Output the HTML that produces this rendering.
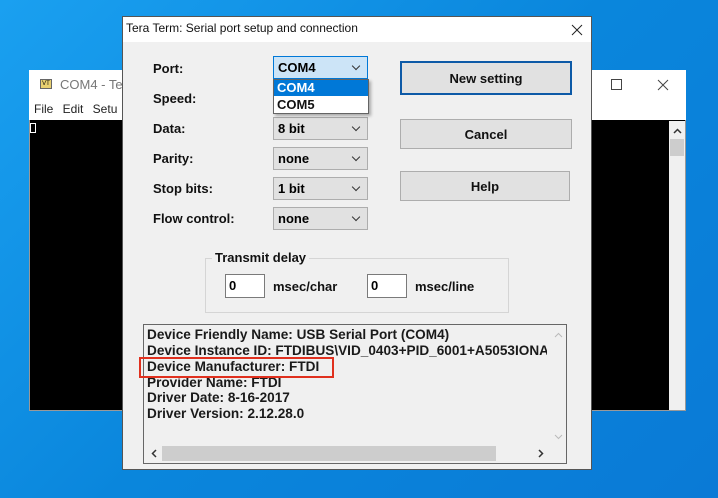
<!DOCTYPE html>
<html><head><style>
*{margin:0;padding:0;box-sizing:border-box}
body{width:718px;height:498px;overflow:hidden;position:relative;font-family:"Liberation Sans",sans-serif;background:linear-gradient(135deg,#1aa0f0 0%,#0a86dc 50%,#0a7ad6 100%)}
.abs{position:absolute}
.b{font-weight:bold;font-size:13px;color:#111}
.combo{position:absolute;left:273px;width:95px;height:23px;background:#e1e1e1;border:1px solid #adadad;font-weight:bold;font-size:13px;padding:3px 0 0 4px}
.combo:after{content:"";position:absolute;right:8px;top:6px;width:5px;height:5px;border-right:1px solid #333;border-bottom:1px solid #333;transform:rotate(45deg)}
.btn{position:absolute;background:#e1e1e1;border:1px solid #adadad;font-weight:bold;font-size:13px;text-align:center;color:#111}
.tb{position:absolute;background:#fff;border:1px solid #7a7a7a;font-weight:bold;font-size:13px;padding:3px 0 0 3px}
.ln{position:absolute;left:147px;font-size:13.6px;font-weight:bold;color:#1a1a1a;white-space:nowrap}
</style></head><body>
<div class="abs" style="left:29px;top:70px;width:657px;height:341px;background:#000;border:1px solid #999"></div>
<div class="abs" style="left:29px;top:70px;width:657px;height:50px;background:#fff"></div>
<div class="abs" style="left:40px;top:79px;width:12px;height:10px;background:#e8d070;border:1px solid #666;font-size:6px;line-height:8px;text-align:center">VT</div>
<div class="abs" style="left:60px;top:77px;font-size:13px;color:#777">COM4 - Tera</div>
<div class="abs" style="left:34px;top:102px;font-size:12px;color:#222;word-spacing:6px">File Edit Setu</div>
<div class="abs" style="left:611px;top:79px;width:11px;height:11px;border:1px solid #444"></div>
<svg class="abs" style="left:657px;top:79px" width="12" height="12"><path d="M1 1L11 11M11 1L1 11" stroke="#444" stroke-width="1"/></svg>
<div class="abs" style="left:30px;top:123px;width:6px;height:10px;border:1px solid #fff"></div>
<div class="abs" style="left:669px;top:121px;width:16px;height:289px;background:#f0f0f0"></div>
<div class="abs" style="left:670px;top:139px;width:14px;height:17px;background:#cdcdcd"></div>
<svg class="abs" style="left:673px;top:128px" width="9" height="6"><path d="M1 5L4.5 1.5L8 5" stroke="#333" fill="none" stroke-width="1.5"/></svg>
<div class="abs" style="left:122px;top:16px;width:470px;height:454px;background:#f0f0f0;border:1px solid #555"></div>
<div class="abs" style="left:123px;top:17px;width:468px;height:25px;background:#fff"></div>
<div class="abs" style="left:126px;top:21px;font-size:12px;color:#111">Tera Term: Serial port setup and connection</div>
<svg class="abs" style="left:571px;top:24px" width="12" height="12"><path d="M1 1L11 11M11 1L1 11" stroke="#222" stroke-width="1"/></svg>
<div class="abs b" style="left:153px;top:61px">Port:</div>
<div class="abs b" style="left:153px;top:91px">Speed:</div>
<div class="abs b" style="left:153px;top:121px">Data:</div>
<div class="abs b" style="left:153px;top:151px">Parity:</div>
<div class="abs b" style="left:153px;top:181px">Stop bits:</div>
<div class="abs b" style="left:153px;top:211px">Flow control:</div>
<div class="combo" style="top:56px;background:#cce4f7;border-color:#0078d7">COM4</div>
<div class="combo" style="top:117px">8 bit</div>
<div class="combo" style="top:147px">none</div>
<div class="combo" style="top:177px">1 bit</div>
<div class="combo" style="top:207px">none</div>
<div class="abs" style="left:273px;top:79px;width:96px;height:35px;background:#fff;border:1px solid #646464;box-shadow:2px 2px 3px rgba(0,0,0,.3)"></div>
<div class="abs b" style="left:274px;top:80px;width:94px;height:16px;background:#0078d7;color:#fff;padding-left:3px">COM4</div>
<div class="abs b" style="left:277px;top:97px">COM5</div>
<div class="btn" style="left:400px;top:61px;width:172px;height:34px;border:2px solid #0d5aa7;padding-top:8px">New setting</div>
<div class="btn" style="left:400px;top:119px;width:172px;height:30px;padding-top:7px">Cancel</div>
<div class="btn" style="left:400px;top:171px;width:170px;height:30px;padding-top:7px">Help</div>
<div class="abs" style="left:205px;top:258px;width:304px;height:55px;border:1px solid #d5d5d5"></div>
<div class="abs b" style="left:212px;top:250px;background:#f0f0f0;padding:0 3px">Transmit delay</div>
<div class="tb" style="left:225px;top:274px;width:40px;height:24px">0</div>
<div class="abs b" style="left:273px;top:279px">msec/char</div>
<div class="tb" style="left:367px;top:274px;width:40px;height:24px">0</div>
<div class="abs b" style="left:415px;top:279px">msec/line</div>
<div class="abs" style="left:143px;top:324px;width:424px;height:140px;background:#f0f0f0;border:1px solid #666"></div>
<div class="ln" style="top:327px">Device Friendly Name: USB Serial Port (COM4)</div>
<div class="ln" style="top:343px;width:400px;overflow:hidden">Device Instance ID: FTDIBUS\VID_0403+PID_6001+A5053IONA</div>
<div class="ln" style="top:359px">Device Manufacturer: FTDI</div>
<div class="ln" style="top:375px">Provider Name: FTDI</div>
<div class="ln" style="top:390px">Driver Date: 8-16-2017</div>
<div class="ln" style="top:406px">Driver Version: 2.12.28.0</div>
<div class="abs" style="left:139px;top:357px;width:195px;height:21px;border:2px solid #e0301e"></div>
<div class="abs" style="left:147px;top:445px;width:403px;height:17px;background:#f0f0f0"></div>
<div class="abs" style="left:162px;top:446px;width:334px;height:15px;background:#cdcdcd"></div>
<svg class="abs" style="left:151px;top:449px" width="6" height="9"><path d="M5 1L1.5 4.5L5 8" stroke="#333" fill="none" stroke-width="1.5"/></svg>
<svg class="abs" style="left:538px;top:449px" width="6" height="9"><path d="M1 1L4.5 4.5L1 8" stroke="#333" fill="none" stroke-width="1.5"/></svg>
<svg class="abs" style="left:554px;top:332px" width="9" height="6"><path d="M1 5L4.5 1.5L8 5" stroke="#bbb" fill="none" stroke-width="1"/></svg>
<svg class="abs" style="left:554px;top:434px" width="9" height="6"><path d="M1 1L4.5 4.5L8 1" stroke="#bbb" fill="none" stroke-width="1"/></svg>
</body></html>
